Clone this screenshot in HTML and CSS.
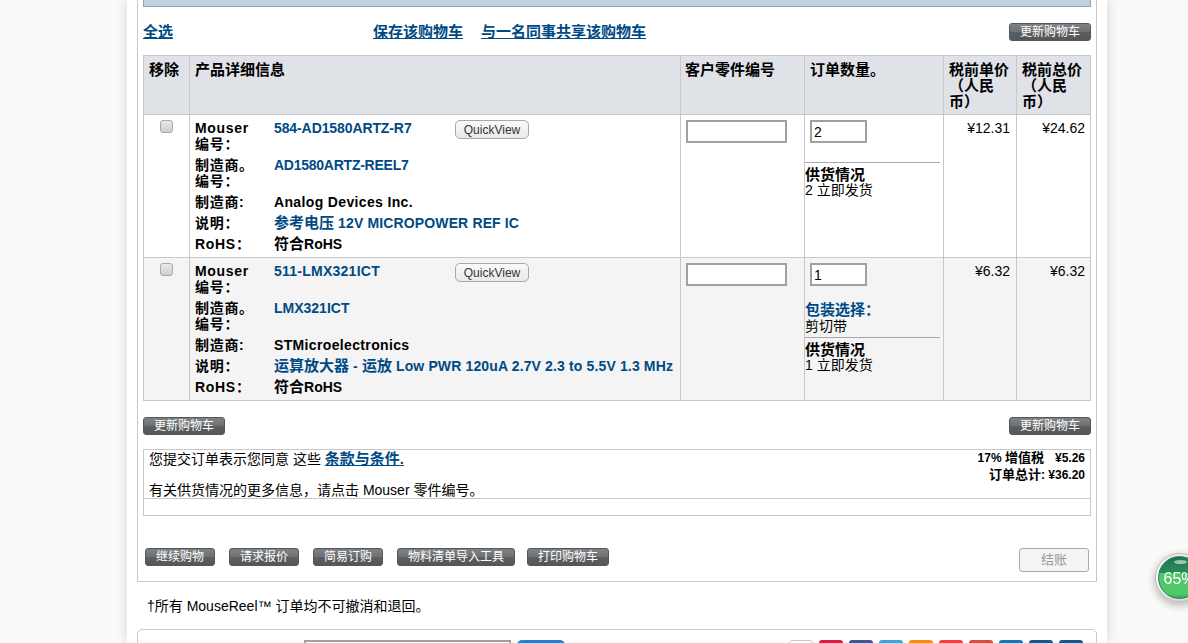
FILE: index.html
```html
<!DOCTYPE html>
<html lang="zh-CN">
<head>
<meta charset="utf-8">
<title>购物车</title>
<link rel="stylesheet" href="styles.css">
</head>
<body>
<div class="sheet">
  <section class="panel">
    <div class="topbar"></div>
    <div class="linkrow">
      <a class="link select-all" href="#">全选</a>
      <a class="link" href="#">保存该购物车</a>
      <a class="link" href="#">与一名同事共享该购物车</a>
      <button class="btn push">更新购物车</button>
    </div>
    <table class="cart">
      <colgroup>
        <col class="c-rm"><col class="c-info"><col class="c-cust"><col class="c-qty"><col class="c-unit"><col class="c-total">
      </colgroup>
      <thead>
        <tr>
          <th>移除</th>
          <th>产品详细信息</th>
          <th class="th-cust">客户零件编号</th>
          <th>订单数量。</th>
          <th>税前单价（人民币）</th>
          <th>税前总价（人民币）</th>
        </tr>
      </thead>
      <tbody>
        <tr>
          <td class="rm"><input class="check" type="checkbox"></td>
          <td class="info">
            <div class="details">
              <span class="lbl">Mouser 编号：</span>
              <a class="val tight-s" href="#">584-AD1580ARTZ-R7</a>
              <button class="qv">QuickView</button>
              <span class="lbl">制造商。编号：</span>
              <a class="val wide tight" href="#">AD1580ARTZ-REEL7</a>
              <span class="lbl">制造商:</span>
              <span class="plain wide loose">Analog Devices Inc.</span>
              <span class="lbl">说明：</span>
              <a class="val wide desc" href="#"><span class="cjk">参考电压</span> 12V MICROPOWER REF IC</a>
              <span class="lbl">RoHS：</span>
              <span class="plain wide"><span class="cjk">符合</span>RoHS</span>
            </div>
          </td>
          <td class="cust"><input class="field cust-input" type="text"></td>
          <td class="qty">
            <input class="field qty-input" type="text" value="2">
            <div class="pack-empty"></div>
            <div class="avail"><strong class="avail-title">供货情况</strong>2 立即发货</div>
          </td>
          <td class="price">¥12.31</td>
          <td class="price">¥24.62</td>
        </tr>
        <tr class="alt">
          <td class="rm"><input class="check" type="checkbox"></td>
          <td class="info">
            <div class="details">
              <span class="lbl">Mouser 编号：</span>
              <a class="val wider" href="#">511-LMX321ICT</a>
              <button class="qv">QuickView</button>
              <span class="lbl">制造商。编号：</span>
              <a class="val wide" href="#">LMX321ICT</a>
              <span class="lbl">制造商:</span>
              <span class="plain wide loose">STMicroelectronics</span>
              <span class="lbl">说明：</span>
              <a class="val wide desc" href="#"><span class="cjk">运算放大器</span> - <span class="cjk">运放</span> Low PWR 120uA 2.7V 2.3 to 5.5V 1.3 MHz</a>
              <span class="lbl">RoHS：</span>
              <span class="plain wide"><span class="cjk">符合</span>RoHS</span>
            </div>
          </td>
          <td class="cust"><input class="field cust-input" type="text"></td>
          <td class="qty">
            <input class="field qty-input" type="text" value="1">
            <div class="pack"><a class="pack-link" href="#">包装选择：</a><br>剪切带</div>
            <div class="avail"><strong class="avail-title">供货情况</strong>1 立即发货</div>
          </td>
          <td class="price">¥6.32</td>
          <td class="price">¥6.32</td>
        </tr>
      </tbody>
    </table>
    <div class="update-row">
      <button class="btn">更新购物车</button>
      <button class="btn">更新购物车</button>
    </div>
    <div class="summary">
      <div class="summary-main">
        <div class="terms">
          <p class="terms-line">您提交订单表示您同意 这些 <a class="link" href="#">条款与条件.</a></p>
          <p class="terms-line second">有关供货情况的更多信息，请点击 Mouser 零件编号。</p>
        </div>
        <div class="totals">
          <div class="total-line">17% <span class="tc">增值税</span><span class="tax-amt">¥5.26</span></div>
          <div class="total-line"><span class="tc">订单总计</span>: ¥36.20</div>
        </div>
      </div>
      <div class="summary-foot"></div>
    </div>
    <div class="actions">
      <button class="btn">继续购物</button>
      <button class="btn">请求报价</button>
      <button class="btn">简易订购</button>
      <button class="btn">物料清单导入工具</button>
      <button class="btn print">打印购物车</button>
      <button class="checkout">结账</button>
    </div>
  </section>
  <p class="note">†所有 MouseReel™ 订单均不可撤消和退回。</p>
  <section class="share">
    <strong class="share-title">与他人分享此页面：</strong>
    <input class="share-input" type="text">
    <button class="share-btn"></button>
    <div class="icons">
      <span class="ico i-mail"></span>
      <span class="ico i-red"></span>
      <span class="ico i-fb"></span>
      <span class="ico i-tw"></span>
      <span class="ico i-or"></span>
      <span class="ico i-yt"></span>
      <span class="ico i-gp"></span>
      <span class="ico i-li"></span>
      <span class="ico i-dk"></span>
      <span class="ico i-dk"></span>
    </div>
  </section>
</div>
<div class="badge"><div class="badge-inner"><span class="badge-gloss"></span><span class="badge-text">65%</span></div></div>
</body>
</html>
```
FILE: styles.css
```css
* { box-sizing: border-box; }
html, body { height: 100%; }
body {
  margin: 0;
  overflow: hidden;
  background: #fafaf8;
  color: #000;
  font: 14px/16px "Liberation Sans", "Noto Sans CJK SC", sans-serif;
}
.sheet {
  width: 980px;
  height: 100%;
  margin-left: 127px;
  padding: 0 10px;
  background: #fff;
  box-shadow: 0 0 12px rgba(0, 0, 0, .16);
}
.panel {
  border: 1px solid #c8c8c8;
  border-top: 0;
  padding: 0 5px;
}
.topbar {
  height: 7px;
  background: #bfd2e2;
  border: 1px solid #8fa3b8;
  border-top: 0;
}
.linkrow {
  display: flex;
  align-items: center;
  gap: 18px;
  height: 48px;
  padding-top: 2px;
}
.link {
  color: #004a84;
  font-size: 15px;
  font-weight: bold;
  text-decoration: underline;
}
.select-all { width: 212px; }
.push { margin-left: auto; }
.btn {
  height: 18px;
  padding: 0 10px;
  border: 1px solid #55585b;
  border-radius: 3px;
  background: linear-gradient(#7f8285, #6e7174 50%, #5c5f62 50%, #54575a);
  color: #fff;
  font: 12px/16px "Liberation Sans", "Noto Sans CJK SC", sans-serif;
  white-space: nowrap;
}
.cart {
  width: 947px;
  table-layout: fixed;
  border-collapse: collapse;
}
.c-rm { width: 46px; }
.c-info { width: 491px; }
.c-cust { width: 124px; }
.c-qty { width: 139px; }
.c-unit { width: 73px; }
.c-total { width: 74px; }
.cart th, .cart td {
  border: 1px solid #c8c8c8;
  vertical-align: top;
}
.cart th {
  padding: 6px 5px 4px;
  background: #dfe2e6;
  font-size: 15px;
  font-weight: bold;
  text-align: left;
}
.cart .th-cust { padding-left: 4px; }
.cart td { padding: 5px; }
.alt td { background: #f4f4f4; }
.cart .rm { text-align: center; padding: 5px 0 0; }
.check {
  appearance: none;
  display: block;
  width: 13px;
  height: 13px;
  margin: 0 auto;
  border: 1px solid #a9a9a9;
  border-radius: 3px;
  background: linear-gradient(#e9e9e9, #cfcfcf);
}
.details {
  display: grid;
  grid-template-columns: 79px 181px auto;
  row-gap: 5px;
  font-weight: bold;
}
.lbl { width: 70px; letter-spacing: .7px; }
.val { color: #004a84; text-decoration: none; }
.plain { color: #000; }
.wide { grid-column: 2 / 4; }
.tight-s { letter-spacing: -.1px; }
.tight { letter-spacing: -.25px; }
.wider { letter-spacing: .25px; }
.loose { letter-spacing: .35px; }
.desc { letter-spacing: .14px; }
.cjk { font-size: 15px; letter-spacing: 0; }
.qv {
  justify-self: start;
  width: 74px;
  height: 19px;
  padding: 0;
  border: 1px solid #a8a8a8;
  border-radius: 5px;
  background: linear-gradient(#fafafa, #e9e9e9);
  color: #333;
  font: 12px/16px "Liberation Sans", sans-serif;
}
.field {
  display: block;
  height: 23px;
  padding: 0 2px;
  border: 2px solid #a0a0a0;
  background: #fff;
  color: #000;
  font: 14px/16px "Liberation Sans", sans-serif;
}
.cust-input { width: 101px; }
.cart .qty { padding: 5px 3px 0 0; }
.qty-input { width: 57px; margin-left: 5px; }
.pack-empty { height: 16px; }
.pack { margin-top: 16px; }
.pack-link { color: #004a84; font-size: 15px; font-weight: bold; text-decoration: none; }
.avail {
  margin-top: 3px;
  padding-top: 4px;
  border-top: 1px solid #a8a8a8;
}
.avail-title { display: block; height: 15px; font-size: 15px; }
.cart .price { text-align: right; padding: 5px 6px; }
.cart .price:last-child { padding-right: 5px; }
.update-row {
  display: flex;
  justify-content: space-between;
  margin-top: 16px;
}
.summary {
  margin-top: 14px;
  border: 1px solid #c8c8c8;
}
.summary-main {
  display: flex;
  justify-content: space-between;
  height: 49px;
  padding: 1px 5px 0;
  border-bottom: 1px solid #c8c8c8;
}
.summary-foot { height: 16px; }
.terms-line { margin: 0; }
.terms-line.second { margin-top: 15px; }
.totals {
  margin-top: -1px;
  text-align: right;
  font-size: 12px;
  font-weight: bold;
}
.tc { font-size: 13px; }
.total-line { height: 17px; }
.tax-amt { margin-left: 11px; }
.actions {
  display: flex;
  align-items: flex-start;
  gap: 14px;
  padding: 32px 2px 9px;
}
.print { margin-left: -2px; }
.checkout {
  width: 70px;
  height: 24px;
  margin-left: auto;
  padding: 0;
  border: 1px solid #a8a8a8;
  border-radius: 3px;
  background: #f4f4f4;
  color: #999;
  font: 13px/16px "Liberation Sans", "Noto Sans CJK SC", sans-serif;
}
.note {
  height: 47px;
  margin: 0;
  padding: 16px 0 0 10px;
}
.share {
  display: flex;
  align-items: flex-start;
  height: 40px;
  padding: 10px 13px 0 11px;
  border: 1px solid #c8c8c8;
  border-radius: 5px;
}
.share-title { width: 155px; margin-top: 2px; font-size: 15px; line-height: 18px; }
.share-input {
  width: 207px;
  height: 24px;
  border: 2px solid #a0a0a0;
}
.share-btn {
  width: 48px;
  height: 24px;
  margin-left: 6px;
  border: 0;
  border-radius: 5px;
  background: linear-gradient(#1a86d8, #0f6db8);
}
.icons { display: flex; gap: 6px; margin-left: auto; }
.ico { width: 24px; height: 24px; border-radius: 3px; }
.i-mail { background: #fff; border: 1px solid #c8c8c8; }
.i-red { background: #e8173c; }
.i-fb { background: #3b5998; }
.i-tw { background: #2faae1; }
.i-or { background: #ff8a00; }
.i-yt { background: #ff3838; }
.i-gp { background: #dd4b39; }
.i-li { background: #0a7ab8; }
.i-dk { background: #0f5a96; }
.badge {
  position: fixed;
  left: 1155px;
  top: 553px;
  width: 49px;
  height: 49px;
  padding: 2px;
  border: 1px solid #b4b4b4;
  border-radius: 50%;
  background: linear-gradient(#eee, #fff 50%, #ddd);
  box-shadow: 0 3px 8px rgba(0, 0, 0, .3);
}
.badge-inner {
  position: relative;
  height: 100%;
  overflow: hidden;
  border: 1px solid #2a7d56;
  border-radius: 50%;
  background: linear-gradient(#1d7550, #2a8d5c 38%, #4fc868 38%, #4fc868 90%, #3aa858);
  text-align: center;
}
.badge-gloss {
  position: absolute;
  left: 15px;
  top: 3px;
  width: 13px;
  height: 4px;
  border-radius: 50%;
  background: rgba(255, 255, 255, .55);
}
.badge-text {
  position: absolute;
  left: 0;
  right: 0;
  top: 12px;
  color: #fff;
  font-size: 16px;
  line-height: 20px;
}
```
